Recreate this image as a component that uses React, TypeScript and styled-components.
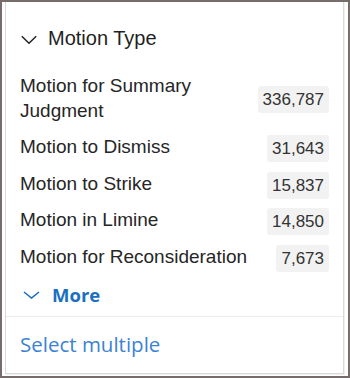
import React from 'react';
import styled, { createGlobalStyle } from 'styled-components';

const Global = createGlobalStyle`
  html, body { margin: 0; padding: 0; background: #fff; }
  * { box-sizing: border-box; }
`;

const Frame = styled.div`
  width: 350px;
  height: 378px;
  border: 2px solid #766c6b;
  padding: 0 4px 2px 3px;
  display: flex;
  flex-direction: column;
  background: #fff;
`;

const Card = styled.section`
  flex: 1;
  border: 1px solid #d9d9d9;
  border-top: none;
  box-shadow: 1px 1px 0 #f0f0f0;
  display: flex;
  flex-direction: column;
  font-family: "Liberation Sans", Arial, sans-serif;
`;

const Header = styled.h2`
  margin: 0;
  padding: 24px 14px 0 15px;
  display: flex;
  align-items: center;
  gap: 11px;
  font-size: 20px;
  line-height: 25px;
  font-weight: 400;
  color: #1f1f1f;
`;

const List = styled.div`
  padding: 17.7px 14px 0 14px;
  display: flex;
  flex-direction: column;
`;

const Row = styled.div`
  display: flex;
  align-items: center;
  gap: 10px;
  padding: 3.83px 0;
`;

const Name = styled.span`
  flex: 1;
  font-size: 19px;
  line-height: 25px;
  padding-bottom: 4px;
  color: #262626;
`;

const Count = styled.span`
  font-size: 17px;
  line-height: 19px;
  padding: 4px 5px;
  background: #f2f2f2;
  border-radius: 3px;
  color: #333;
`;

const MoreButton = styled.button`
  all: unset;
  display: flex;
  align-items: center;
  gap: 12px;
  margin: 5.5px 0 8.5px 3px;
  font-family: "Open Sans", "Segoe UI", sans-serif;
  font-weight: 700;
  font-size: 18.5px;
  line-height: 25px;
  color: #1b6ec2;
  cursor: pointer;
`;

const Footer = styled.div`
  border-top: 1px solid #ececec;
  padding: 15px 14px 0 14px;
`;

const SelectLink = styled.a`
  font-family: "Open Sans", "Segoe UI", sans-serif;
  font-size: 20.5px;
  line-height: 25px;
  color: #3c82d2;
  text-decoration: none;
  cursor: pointer;
`;

const items: { name: string; count: string }[] = [
  { name: 'Motion for Summary Judgment', count: '336,787' },
  { name: 'Motion to Dismiss', count: '31,643' },
  { name: 'Motion to Strike', count: '15,837' },
  { name: 'Motion in Limine', count: '14,850' },
  { name: 'Motion for Reconsideration', count: '7,673' },
];

export default function App() {
  return (
    <>
      <Global />
      <Frame>
        <Card>
          <Header>
            <svg width="16" height="10" viewBox="0 0 16 10" style={{ marginTop: 2 }}>
              <path d="M0.8 1.2 L8 8.2 L15.2 1.2" fill="none" stroke="#222" strokeWidth="1.5" />
            </svg>
            Motion Type
          </Header>
          <List>
            {items.map((it) => (
              <Row key={it.name}>
                <Name>{it.name}</Name>
                <Count>{it.count}</Count>
              </Row>
            ))}
            <MoreButton>
              <svg width="17" height="8" viewBox="0 0 17 8">
                <path d="M1 1 L8.5 7 L16 1" fill="none" stroke="#1b6ec2" strokeWidth="1.6" />
              </svg>
              More
            </MoreButton>
          </List>
          <Footer>
            <SelectLink>Select multiple</SelectLink>
          </Footer>
        </Card>
      </Frame>
    </>
  );
}
